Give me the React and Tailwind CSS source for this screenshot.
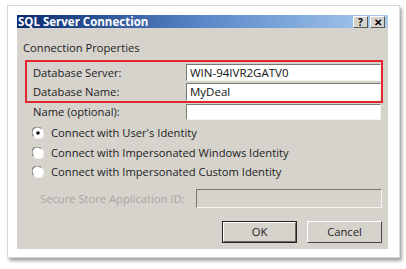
import React from "react";

const Radio = ({ checked }) => (
  <svg width="12" height="12" viewBox="0 0 12 12" className="shrink-0">
    <circle cx="6" cy="6" r="5.5" fill="#ffffff" />
    <path d="M1.5 9 A5 5 0 0 1 9 1.5" stroke="#8a8782" strokeWidth="1.2" fill="none" />
    <path d="M10.5 3 A5 5 0 0 1 3 10.5" stroke="#f2f1ee" strokeWidth="1.2" fill="none" />
    {checked && <circle cx="6" cy="6" r="1.8" fill="#111" />}
  </svg>
);

const Field = ({ value, className = "" }) => (
  <div
    className={`border border-t-[#7a7873] border-l-[#7a7873] border-b-[#f4f3f0] border-r-[#f4f3f0] bg-white pl-[3px] flex items-center text-[11.5px] text-[#111] ${className}`}
  >
    {value}
  </div>
);

const App = () => {
  return (
    <div className="w-[406px] h-[269px] bg-white pl-[7px] pt-[5px]" style={{ fontFamily: '"Open Sans", "Noto Sans", sans-serif' }}>
      <div className="w-[393px] h-[253px] bg-white border border-[#d8d8d8] shadow-[2px_3px_3px_rgba(0,0,0,0.35)] pl-[9px] pt-[9px]">
        <div className="w-[371px] h-[234px] flex flex-col bg-[#d6d3cd]">
          <div className="h-[13px] flex items-center justify-between bg-gradient-to-r from-[#0b2a70] via-[#5a87c8] to-[#a9ccee] pr-[3px]">
            <span className="text-white font-bold text-[11.5px] leading-none pl-[1px]">SQL Server Connection</span>
            <div className="flex gap-[2px]">
              <div className="w-[15px] h-[12px] bg-[#d6d3cd] border border-t-white border-l-white border-b-[#5a5a5a] border-r-[#5a5a5a] flex items-center justify-center text-[10px] font-bold leading-none text-black">?</div>
              <div className="w-[15px] h-[12px] bg-[#d6d3cd] border border-t-white border-l-white border-b-[#5a5a5a] border-r-[#5a5a5a] flex items-center justify-center text-[10px] font-bold leading-none text-black">✕</div>
            </div>
          </div>
          <div className="flex flex-col text-[11.2px] text-[#222] leading-none">
            <div className="pl-[6px] pt-[14px] h-[32px]">Connection Properties</div>
            <div className="ml-[8px] w-[358px] h-[43px] border-2 border-[#e0262e] flex flex-col pl-[6px] pt-[1px]">
              <div className="flex items-center h-[19px]">
                <span className="w-[153px]">Database Server:</span>
                <Field value="WIN-94IVR2GATV0" className="w-[195px] h-[17px]" />
              </div>
              <div className="flex items-center h-[19px]">
                <span className="w-[153px]">Database Name:</span>
                <Field value="MyDeal" className="w-[195px] h-[18px]" />
              </div>
            </div>
            <div className="flex items-center h-[17px] pl-[16px]">
              <span className="w-[153px]">Name (optional):</span>
              <Field value="" className="w-[195px] h-[16px]" />
            </div>
            <div className="flex flex-col pl-[15px] pt-[3px]">
              <div className="flex items-center h-[20px] gap-[7px]">
                <Radio checked />
                <span>Connect with User's Identity</span>
              </div>
              <div className="flex items-center h-[19px] gap-[7px]">
                <Radio />
                <span>Connect with Impersonated Windows Identity</span>
              </div>
              <div className="flex items-center h-[19px] gap-[7px]">
                <Radio />
                <span>Connect with Impersonated Custom Identity</span>
              </div>
            </div>
            <div className="flex items-center pl-[23px] pt-[7px] h-[28px]">
              <span className="w-[156px] text-[#a8a6a1]">Secure Store Application ID:</span>
              <div className="w-[186px] h-[19px] border border-t-[#7a7873] border-l-[#7a7873] border-b-[#f4f3f0] border-r-[#f4f3f0] bg-[#d6d3cd]" />
            </div>
            <div className="flex justify-end gap-[10px] pr-[6px] pt-[12px]">
              <div className="w-[75px] h-[22px] border border-[#222] flex items-center justify-center">
                <div className="w-full h-full border border-t-white border-l-white border-b-[#6b6965] border-r-[#6b6965] flex items-center justify-center">OK</div>
              </div>
              <div className="w-[75px] h-[22px] border border-t-white border-l-white border-b-[#444] border-r-[#444] flex items-center justify-center">Cancel</div>
            </div>
          </div>
        </div>
      </div>
    </div>
  );
};

export default App;
